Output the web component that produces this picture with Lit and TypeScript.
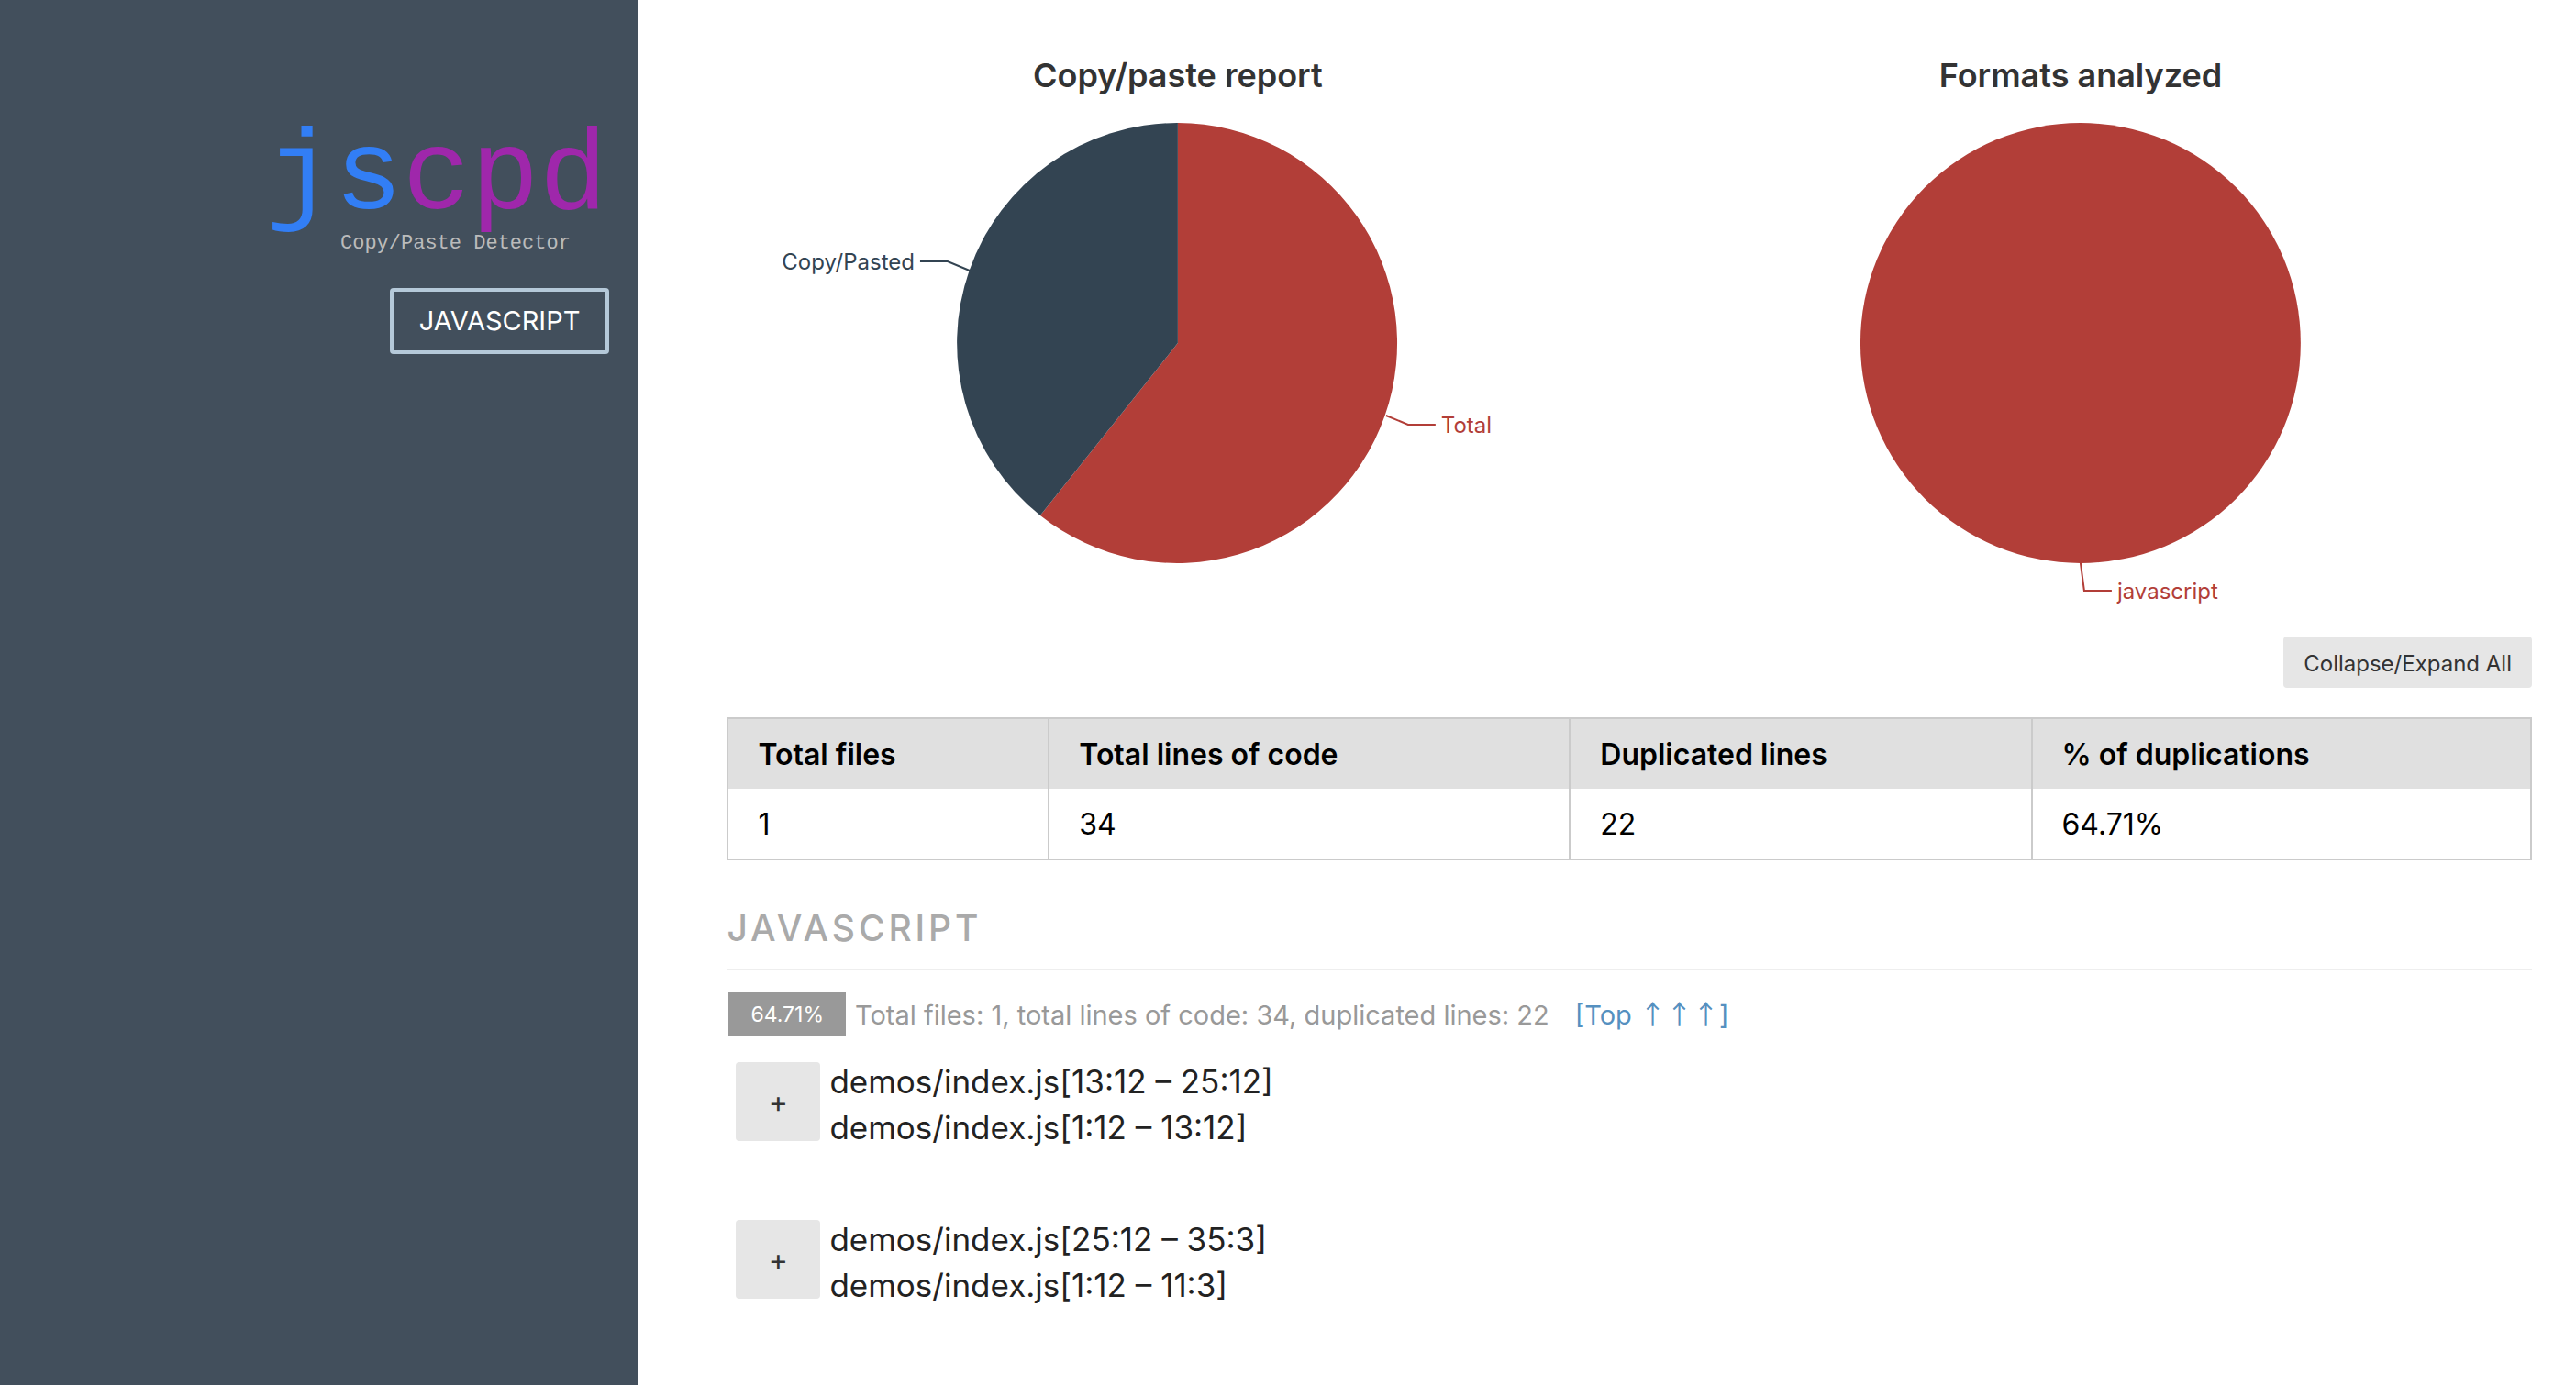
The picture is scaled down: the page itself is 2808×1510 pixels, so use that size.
import { LitElement, html, svg, css } from "lit";
import { customElement, property, state } from "lit/decorators.js";

interface Slice {
  name: string;
  value: number;
  color: string;
}

interface Clone {
  first: string;
  second: string;
}

const RADIUS = 240;
const CX = 492;
const CY = 374;

@customElement("pie-chart")
class PieChart extends LitElement {
  @property() heading = "";
  @property({ attribute: false }) slices: Slice[] = [];

  static styles = css`
    :host {
      display: block;
      flex: 1;
      min-width: 0;
    }
    .chart {
      display: block;
      width: 100%;
      height: 694px;
      overflow: visible;
      font-family: Inter, "Liberation Sans", sans-serif;
    }
    .heading {
      font-size: 36px;
      font-weight: 600;
      fill: #333;
      text-anchor: middle;
    }
    .label {
      font-size: 24px;
    }
    .leader {
      fill: none;
      stroke-width: 2;
    }
  `;

  private point(angle: number, radius: number) {
    return {
      x: Math.round(CX + Math.sin(angle) * radius),
      y: Math.round(CY - Math.cos(angle) * radius),
    };
  }

  private drawSlice(slice: Slice, start: number, sweep: number) {
    const from = this.point(start, RADIUS);
    const to = this.point(start + sweep, RADIUS);
    const large = sweep > Math.PI ? 1 : 0;
    const full = sweep > Math.PI * 2 - 0.001;
    const middle = start + sweep / 2;
    const edge = this.point(middle, RADIUS);
    const elbow = this.point(middle + (full ? -0.015 : 0.005), RADIUS + (full ? 30 : 26));
    const side = elbow.x >= CX ? 1 : -1;
    const end = elbow.x + side * 30;
    return svg`
      ${full
        ? svg`<circle cx=${CX} cy=${CY} r=${RADIUS} fill=${slice.color}></circle>`
        : svg`<path fill=${slice.color}
            d="M${CX} ${CY}L${from.x} ${from.y}A${RADIUS} ${RADIUS} 0 ${large} 1 ${to.x} ${to.y}Z"></path>`}
      <polyline class="leader" stroke=${slice.color}
        points="${edge.x},${edge.y} ${elbow.x},${elbow.y} ${end},${elbow.y}"></polyline>
      <text class="label" fill=${slice.color} x=${end + side * 6} y=${elbow.y + 9}
        text-anchor=${side > 0 ? "start" : "end"}>${slice.name}</text>
    `;
  }

  render() {
    const total = this.slices.reduce((sum, s) => sum + s.value, 0);
    let angle = 0;
    const parts = this.slices.map((s) => {
      const sweep = (s.value / total) * Math.PI * 2;
      const part = this.drawSlice(s, angle, sweep);
      angle += sweep;
      return part;
    });
    return html`
      <svg class="chart" viewBox="0 0 984 694" role="img" aria-label=${this.heading}>
        <text class="heading" x=${CX} y="95">${this.heading}</text>
        ${parts}
      </svg>
    `;
  }
}

@customElement("clone-item")
class CloneItem extends LitElement {
  @property({ attribute: false }) clone: Clone = { first: "", second: "" };
  @property({ type: Boolean }) open = false;

  static styles = css`
    :host {
      display: flex;
      align-items: flex-start;
      gap: 10px;
      padding-left: 10px;
    }
    .toggle {
      box-sizing: border-box;
      width: 92px;
      height: 86px;
      margin: 4px 0 0;
      border: 0;
      border-radius: 4px;
      background: #e6e6e6;
      color: #333;
      font: 32px Inter, "Liberation Sans", sans-serif;
      cursor: pointer;
    }
    .files {
      font-size: 35px;
      line-height: 50px;
    }
  `;

  render() {
    return html`
      <button
        class="toggle"
        aria-expanded=${this.open ? "true" : "false"}
        @click=${() => (this.open = !this.open)}
      >${this.open ? "-" : "+"}</button>
      <div class="files">
        <div>${this.clone.first}</div>
        <div>${this.clone.second}</div>
      </div>
    `;
  }
}

@customElement("app-root")
class AppRoot extends LitElement {
  @state() private expanded = false;

  private report: Slice[] = [
    { name: "Total", value: 34, color: "#b23e38" },
    { name: "Copy/Pasted", value: 22, color: "#334452" },
  ];

  private formats: Slice[] = [{ name: "javascript", value: 1, color: "#b23e38" }];

  private clones: Clone[] = [
    { first: "demos/index.js[13:12 – 25:12]", second: "demos/index.js[1:12 – 13:12]" },
    { first: "demos/index.js[25:12 – 35:3]", second: "demos/index.js[1:12 – 11:3]" },
  ];

  static styles = css`
    :host {
      display: flex;
      min-height: 100vh;
      background: #fff;
      color: #222;
      font-family: Inter, "Liberation Sans", sans-serif;
    }
    .sidebar {
      box-sizing: border-box;
      width: 24.8%;
      padding: 128px 32px 32px;
      background: #424f5c;
      display: flex;
      flex-direction: column;
      align-items: flex-end;
      gap: 32px;
    }
    .logo {
      display: block;
      width: 388px;
      height: 154px;
      overflow: visible;
      font-family: "Liberation Mono", monospace;
    }
    .wordmark {
      font-size: 124px;
    }
    .js {
      fill: #327ef5;
    }
    .cpd {
      fill: #9f27ab;
    }
    .tagline {
      font-size: 22px;
      fill: #bbb;
    }
    .format {
      box-sizing: border-box;
      height: 72px;
      padding: 0 28px;
      border: 4px solid #b5c9d9;
      border-radius: 4px;
      color: #fff;
      font-size: 29px;
      line-height: 64px;
      text-decoration: none;
    }
    .content {
      flex: 1;
      min-width: 0;
      padding: 0 48px 48px 96px;
    }
    .charts {
      display: flex;
    }
    .actions {
      display: flex;
      justify-content: flex-end;
      margin-bottom: 32px;
    }
    .all {
      height: 56px;
      padding: 2px 22px 0;
      border: 0;
      border-radius: 4px;
      background: #e6e6e6;
      color: #333;
      font: 24px Inter, "Liberation Sans", sans-serif;
      cursor: pointer;
    }
    .summary {
      width: 100%;
      border-collapse: collapse;
      border: 2px solid #cbcbcb;
      color: #000;
      font-size: 32px;
      line-height: 44px;
      text-align: left;
    }
    .summary th,
    .summary td {
      padding: 17px 32px 15px;
      border-left: 2px solid #cbcbcb;
    }
    .summary th {
      background: #e0e0e0;
      font-weight: 600;
    }
    .c1 {
      width: 17.8%;
    }
    .c2 {
      width: 28.9%;
    }
    .c3 {
      width: 25.6%;
    }
    .subhead {
      margin: 51px 0 24px;
      padding-bottom: 21px;
      border-bottom: 2px solid #eee;
      color: #aaa;
      font-size: 39px;
      font-weight: 500;
      line-height: 46px;
      letter-spacing: 0.1em;
      text-transform: uppercase;
    }
    .meta {
      display: flex;
      align-items: center;
      padding-left: 2px;
      color: #999;
      font-size: 29px;
    }
    .badge {
      padding: 0 24px;
      margin-right: 10px;
      background: #999;
      color: #fff;
      font-size: 23px;
      line-height: 48px;
    }
    .top {
      margin-left: 28px;
      color: #5590c0;
      text-decoration: none;
    }
    .arrows {
      font-family: "Noto Sans CJK SC", sans-serif;
      line-height: 1;
    }
    .clones {
      display: flex;
      flex-direction: column;
      gap: 72px;
      padding-top: 24px;
    }
  `;

  render() {
    return html`
      <nav class="sidebar">
        <svg class="logo" viewBox="0 0 388 154" role="img" aria-label="jscpd Copy/Paste Detector">
          <text class="wordmark" x="14" y="99"><tspan class="js">js</tspan><tspan class="cpd">cpd</tspan></text>
          <text class="tagline" x="95" y="143">Copy/Paste Detector</text>
        </svg>
        <a class="format" href="#javascript">JAVASCRIPT</a>
      </nav>
      <main class="content" id="top">
        <div class="charts">
          <pie-chart heading="Copy/paste report" .slices=${this.report}></pie-chart>
          <pie-chart heading="Formats analyzed" .slices=${this.formats}></pie-chart>
        </div>
        <div class="actions">
          <button class="all" @click=${() => (this.expanded = !this.expanded)}>Collapse/Expand All</button>
        </div>
        <table class="summary">
          <thead>
            <tr>
              <th class="c1" scope="col">Total files</th>
              <th class="c2" scope="col">Total lines of code</th>
              <th class="c3" scope="col">Duplicated lines</th>
              <th scope="col">% of duplications</th>
            </tr>
          </thead>
          <tbody>
            <tr>
              <td>1</td>
              <td>34</td>
              <td>22</td>
              <td>64.71%</td>
            </tr>
          </tbody>
        </table>
        <h2 class="subhead" id="javascript">javascript</h2>
        <div class="meta">
          <span class="badge">64.71%</span>
          <span>Total files: 1, total lines of code: 34, duplicated lines: 22</span>
          <a class="top" href="#top">[Top <span class="arrows">↑↑↑</span>]</a>
        </div>
        <div class="clones">
          ${this.clones.map((c) => html`<clone-item .clone=${c} .open=${this.expanded}></clone-item>`)}
        </div>
      </main>
    `;
  }
}
